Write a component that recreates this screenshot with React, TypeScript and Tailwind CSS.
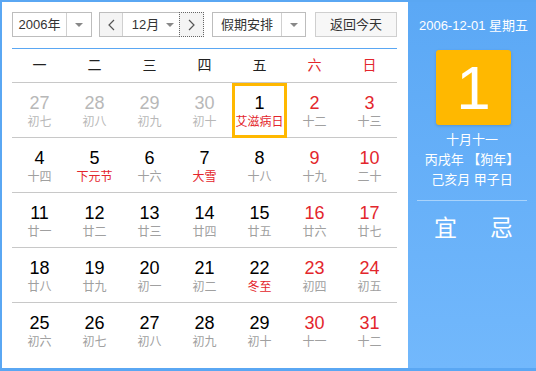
import React from "react";

type Day = { n: number; l: string; muted?: boolean; fest?: boolean; sel?: boolean };

const rows: Day[][] = [
  [
    { n: 27, l: "初七", muted: true },
    { n: 28, l: "初八", muted: true },
    { n: 29, l: "初九", muted: true },
    { n: 30, l: "初十", muted: true },
    { n: 1, l: "艾滋病日", fest: true, sel: true },
    { n: 2, l: "十二" },
    { n: 3, l: "十三" },
  ],
  [
    { n: 4, l: "十四" },
    { n: 5, l: "下元节", fest: true },
    { n: 6, l: "十六" },
    { n: 7, l: "大雪", fest: true },
    { n: 8, l: "十八" },
    { n: 9, l: "十九" },
    { n: 10, l: "二十" },
  ],
  [
    { n: 11, l: "廿一" },
    { n: 12, l: "廿二" },
    { n: 13, l: "廿三" },
    { n: 14, l: "廿四" },
    { n: 15, l: "廿五" },
    { n: 16, l: "廿六" },
    { n: 17, l: "廿七" },
  ],
  [
    { n: 18, l: "廿八" },
    { n: 19, l: "廿九" },
    { n: 20, l: "初一" },
    { n: 21, l: "初二" },
    { n: 22, l: "冬至", fest: true },
    { n: 23, l: "初四" },
    { n: 24, l: "初五" },
  ],
  [
    { n: 25, l: "初六" },
    { n: 26, l: "初七" },
    { n: 27, l: "初八" },
    { n: 28, l: "初九" },
    { n: 29, l: "初十" },
    { n: 30, l: "十一" },
    { n: 31, l: "十二" },
  ],
];

const weekdays = ["一", "二", "三", "四", "五", "六", "日"];

const Caret = () => (
  <span className="w-0 h-0 border-x-[4px] border-x-transparent border-t-[4px] border-t-[#888]" />
);

const Chevron = ({ dir }: { dir: "l" | "r" }) => (
  <svg width="7" height="12" viewBox="0 0 7 12" fill="none">
    <polyline
      points={dir === "l" ? "6,1 1,6 6,11" : "1,1 6,6 1,11"}
      stroke="#555"
      strokeWidth="1.2"
    />
  </svg>
);

export default function App() {
  return (
    <div
      className="w-[536px] h-[371px] bg-[#5aa7f3] pt-[2px] pl-[2px] pb-[3px] flex"
      style={{ fontFamily: '"Liberation Sans", "Noto Sans CJK SC", sans-serif' }}
    >
      <div className="w-[406px] h-full bg-white pt-[10px] pl-[10px]">
        {/* toolbar */}
        <div className="flex h-[25px] text-[13px] text-[#333]">
          <div className="w-[80px] flex border border-[#bdbdbd] bg-white">
            <div className="w-[54px] flex items-center justify-center border-r border-[#d0d0d0]">2006年</div>
            <div className="flex-1 flex items-center justify-center">
              <Caret />
            </div>
          </div>
          <div className="ml-[7px] w-[105px] flex border border-[#bdbdbd]">
            <div className="w-[23px] flex items-center justify-center bg-[#f4f4f4] border-r border-[#d0d0d0]">
              <Chevron dir="l" />
            </div>
            <div className="w-[57px] flex items-center justify-center gap-[7px] pl-[3px]">
              <span>12月</span>
              <Caret />
            </div>
            <div className="flex-1 flex items-center justify-center bg-[#f4f4f4] border border-dotted border-[#666] -m-px">
              <Chevron dir="r" />
            </div>
          </div>
          <div className="ml-[8px] w-[94px] flex border border-[#bdbdbd]">
            <div className="w-[69px] flex items-center justify-center border-r border-[#d0d0d0]">假期安排</div>
            <div className="flex-1 flex items-center justify-center">
              <Caret />
            </div>
          </div>
          <div className="ml-[9px] w-[82px] flex items-center justify-center border border-[#cfcfcf] bg-[#f7f7f7]">
            返回今天
          </div>
        </div>

        {/* calendar */}
        <div className="w-[385px] mt-[11px] border-t border-[#5aa7f3]">
          <div className="grid grid-cols-7 h-[34px] border-b border-[#c8c8c8] text-[14px]">
            {weekdays.map((w, i) => (
              <div
                key={w}
                className={`flex items-center justify-center ${i >= 5 ? "text-[#e3262c]" : "text-[#222]"}`}
              >
                {w}
              </div>
            ))}
          </div>
          {rows.map((row, ri) => (
            <div
              key={ri}
              className={`grid grid-cols-7 h-[55px] ${ri < rows.length - 1 ? "border-b border-[#c8c8c8]" : ""}`}
            >
              {row.map((d, ci) => {
                const weekend = ci >= 5;
                const numColor = d.muted ? "text-[#b8b8b8]" : weekend ? "text-[#e3262c]" : "text-black";
                const lunarColor = d.muted
                  ? "text-[#b8b8b8]"
                  : d.fest
                  ? "text-[#e3262c]"
                  : "text-[#a0a0a0]";
                return (
                  <div key={ci} className="relative flex flex-col items-center pt-[9px]">
                    {d.sel && (
                      <div className="absolute left-0 right-0 top-0 -bottom-px border-[3px] border-[#ffb800]" />
                    )}
                    <div className={`text-[18px] leading-[22px] ${numColor}`}>{d.n}</div>
                    <div className={`text-[12px] leading-[16px] ${lunarColor}`}>{d.l}</div>
                  </div>
                );
              })}
            </div>
          ))}
        </div>
      </div>

      {/* side panel */}
      <div className="flex-1 h-full bg-gradient-to-b from-[#5ba8f5] to-[#72b8fc] flex flex-col items-center text-white">
        <div className="mt-[15px] pl-[3px] text-[13px] leading-[18px]">2006-12-01 星期五</div>
        <div className="mt-[15px] ml-[3px] w-[75px] h-[75px] rounded-[3px] bg-[#ffb800] shadow-[0_1px_3px_rgba(0,0,0,0.15)] flex items-center justify-center text-[62px] leading-none font-light">
          1
        </div>
        <div className="mt-[5px] text-[13px] leading-[20px] text-center">
          <div>十月十一</div>
          <div>丙戌年 【狗年】</div>
          <div>己亥月 甲子日</div>
        </div>
        <div className="mt-[10px] w-[110px] h-px bg-[#a9d3fb]" />
        <div className="mt-[13px] flex gap-[33px] text-[23px] leading-[28px] pl-[3px]">
          <span>宜</span>
          <span>忌</span>
        </div>
      </div>
    </div>
  );
}
